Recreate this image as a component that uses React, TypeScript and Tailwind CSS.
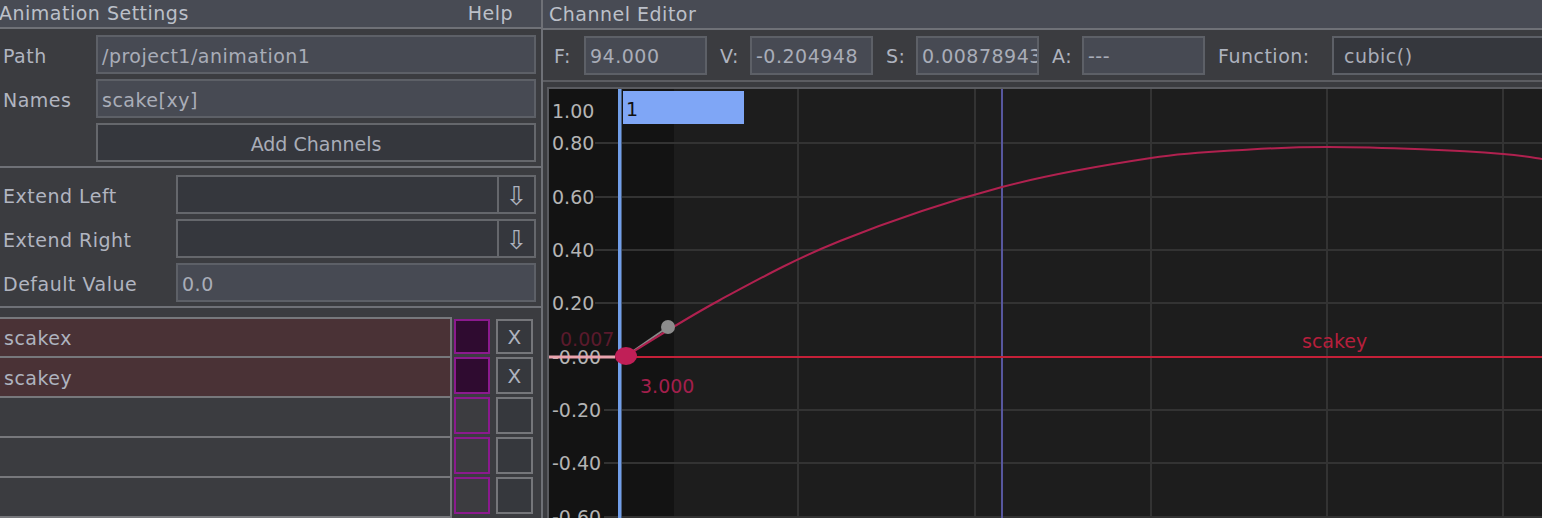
import React from "react";

const curvePts: [number, number][] = [
  [626, 356],
  [720, 300],
  [840, 241],
  [1002, 187],
  [1151, 158],
  [1250, 149.5],
  [1327, 147],
  [1422, 149.3],
  [1503, 154],
  [1542, 159],
];

function catmull(pts: [number, number][]) {
  let d = `M${pts[0][0]},${pts[0][1]}`;
  for (let i = 0; i < pts.length - 1; i++) {
    const p0 = pts[i - 1] || pts[i];
    const p1 = pts[i];
    const p2 = pts[i + 1];
    const p3 = pts[i + 2] || p2;
    const c1x = p1[0] + (p2[0] - p0[0]) / 6;
    const c1y = p1[1] + (p2[1] - p0[1]) / 6;
    const c2x = p2[0] - (p3[0] - p1[0]) / 6;
    const c2y = p2[1] - (p3[1] - p1[1]) / 6;
    d += ` C${c1x},${c1y} ${c2x},${c2y} ${p2[0]},${p2[1]}`;
  }
  return d;
}

function Graph() {
  const hLines: [number, number][] = [
    [143, 595],
    [197, 595],
    [250, 595],
    [303, 595],
    [410, 604],
    [463, 604],
    [517, 604],
  ];
  const vLines = [798, 975, 1151, 1327, 1503];
  const labels: [string, number][] = [
    ["1.00", 111],
    ["0.80", 143],
    ["0.60", 197],
    ["0.40", 250],
    ["0.20", 303],
    ["-0.00", 357],
    ["-0.20", 410],
    ["-0.40", 463],
    ["-0.60", 517],
  ];
  return (
    <svg
      width={993}
      height={429}
      viewBox="549 89 993 429"
      className="block"
      style={{ fontFamily: "'DejaVu Sans', sans-serif", fontSize: 19, letterSpacing: 0 }}
    >
      <rect x={549} y={89} width={993} height={429} fill="#1d1d1d" />
      <rect x={549} y={89} width={125} height={429} fill="#131313" />
      {vLines.map((x) => (
        <line key={x} x1={x} y1={89} x2={x} y2={518} stroke="#333333" strokeWidth={2} />
      ))}
      {hLines.map(([y, x0]) => (
        <line key={y} x1={x0} y1={y} x2={1542} y2={y} stroke="#333333" strokeWidth={2} />
      ))}
      <line x1={1002} y1={89} x2={1002} y2={518} stroke="#57579e" strokeWidth={2} />
      <rect x={618} y={89} width={3} height={429} fill="#719ee9" />
      <rect x={621} y={89} width={1} height={429} fill="#4a5f80" />
      <rect x={623} y={91} width={121} height={33} fill="#7fa6f6" />
      <text x={626} y={109} fill="#111111" dominantBaseline="central">
        1
      </text>
      {labels.map(([t, y]) => (
        <text key={t} x={552} y={y} fill="#b4b4b4" dominantBaseline="central">
          {t}
        </text>
      ))}
      <line x1={549} y1={357} x2={615} y2={357} stroke="#eaa3ad" strokeWidth={3} />
      <line x1={630} y1={357} x2={1542} y2={357} stroke="#c42038" strokeWidth={2} />
      <line x1={626} y1={356} x2={668} y2={327} stroke="#8a8a8a" strokeWidth={2} />
      <path d={catmull(curvePts)} fill="none" stroke="#b0214f" strokeWidth={2} />
      <circle cx={668} cy={327} r={7} fill="#8c8c8c" />
      <ellipse cx={626} cy={356} rx={11} ry={9} fill="#c01f57" />
      <text x={560} y={339} fill="#5a1a2c" dominantBaseline="central">
        0.007
      </text>
      <text x={640} y={386} fill="#a31f4c" dominantBaseline="central">
        3.000
      </text>
      <text x={1302} y={341} fill="#b61f3c" dominantBaseline="central">
        scakey
      </text>
    </svg>
  );
}

function TextInput({ value, className = "" }: { value: string; className?: string }) {
  return (
    <div
      className={`h-[39px] border-2 border-[#5d6067] bg-[#474a53] flex items-center pt-[3px] pl-[4px] text-[#a9adb8] whitespace-nowrap overflow-hidden ${className}`}
    >
      {value}
    </div>
  );
}

function Combo() {
  return (
    <div className="flex-1 h-[39px] border-2 border-[#65676c] bg-[#35373d] flex">
      <div className="flex-1" />
      <div className="w-[37px] border-l-2 border-[#65676c] flex items-center justify-center pt-[2px] text-[#aeb3bf] text-[26px] tracking-normal">
        ⇩
      </div>
    </div>
  );
}

function Label({ text, w }: { text: string; w: string }) {
  return <div className={`${w} pl-[3px] pt-[3px] text-[#b1b5c0]`}>{text}</div>;
}

function Left() {
  const names = ["scakex", "scakey", "", "", ""];
  return (
    <div className="w-[541px] flex flex-col shrink-0">
      <div className="h-[28px] bg-[#484b54] flex items-center justify-between text-[#bcc0c9]">
        <span className="-ml-[1px]">Animation Settings</span>
        <span className="mr-[28px]">Help</span>
      </div>
      <div className="h-[2px] bg-[#6f7177]" />
      <div className="pt-[6px] pr-[5px] flex flex-col gap-[5px]">
        <div className="flex items-center">
          <Label text="Path" w="w-[96px]" />
          <TextInput value="/project1/animation1" className="flex-1" />
        </div>
        <div className="flex items-center">
          <Label text="Names" w="w-[96px]" />
          <TextInput value="scake[xy]" className="flex-1" />
        </div>
        <div className="ml-[96px] h-[39px] border-2 border-[#65676c] bg-[#35373d] flex items-center justify-center pt-[3px] text-[#a9adb8] tracking-normal">
          Add Channels
        </div>
      </div>
      <div className="mt-[4px] h-[2px] bg-[#6f7177]" />
      <div className="pt-[7px] pr-[5px] flex flex-col gap-[5px]">
        <div className="flex items-center">
          <Label text="Extend Left" w="w-[176px]" />
          <Combo />
        </div>
        <div className="flex items-center">
          <Label text="Extend Right" w="w-[176px]" />
          <Combo />
        </div>
        <div className="flex items-center">
          <Label text="Default Value" w="w-[176px]" />
          <TextInput value="0.0" className="flex-1" />
        </div>
      </div>
      <div className="mt-[4px] h-[2px] bg-[#6f7177]" />
      <div className="mt-[9px] flex">
        <div className="w-[452px] flex flex-col">
          {names.map((n, i) => (
            <div
              key={i}
              className={`${i === 0 ? "h-[41px] border-t-2" : "h-[40px]"} border-b-2 border-r-2 border-[#77787c] flex items-center pl-[4px] pt-[3px] text-[#aeb3bf] ${
                n ? "bg-[#4a3236]" : "bg-[#3b3c40]"
              }`}
            >
              {n}
            </div>
          ))}
        </div>
        <div className="ml-[2px] pt-[2px] flex flex-col gap-[3px]">
          {names.map((n, i) => (
            <div key={i} className={`flex gap-[6px] ${i === 0 ? "h-[35px]" : "h-[37px]"}`}>
              <div
                className={`w-[36px] h-full border-2 border-[#8b1a8e] ${
                  n ? "bg-[#2f0b30]" : "bg-[#3c3c40]"
                }`}
              />
              <div className="w-[37px] h-full border-2 border-[#75767a] bg-[#36383d] flex items-center justify-center pt-[2px] text-[#aeb3bf] text-[20px]">
                {n ? "X" : ""}
              </div>
            </div>
          ))}
        </div>
      </div>
    </div>
  );
}

function Field({ label, value }: { label: string; value: string }) {
  return (
    <div className="flex items-center mr-[13px]">
      <div className="w-[30px] pt-[3px] text-[#aeb3bf]">{label}</div>
      <TextInput value={value} className="w-[123px] pl-[4px]" />
    </div>
  );
}

function Right() {
  return (
    <div className="flex-1 flex flex-col min-w-0">
      <div className="h-[28px] bg-[#484b54] flex items-center pl-[6px] text-[#bcc0c9]">
        Channel Editor
      </div>
      <div className="h-[2px] bg-[#6f7177]" />
      <div className="h-[50px] flex items-center pl-[11px] whitespace-nowrap">
        <Field label="F:" value="94.000" />
        <Field label="V:" value="-0.204948" />
        <Field label="S:" value="0.00878943" />
        <Field label="A:" value="---" />
        <div className="w-[114px] pt-[3px] text-[#aeb3bf]">Function:</div>
        <div className="flex-1 h-[39px] border-2 border-r-0 border-[#5d6067] bg-[#35373d] flex items-center pt-[3px] pl-[10px] text-[#a9adb8]">
          cubic()
        </div>
      </div>
      <div className="h-[2px] bg-[#5c5d62]" />
      <div className="mt-[5px] ml-[4px] border-l-2 border-t-2 border-[#5a5b60] flex-1 overflow-hidden">
        <Graph />
      </div>
    </div>
  );
}

export default function App() {
  return (
    <div className="w-[1542px] h-[518px] overflow-hidden flex bg-[#3b3c40] font-['DejaVu_Sans',sans-serif] text-[19px] leading-none tracking-[0.5px]">
      <Left />
      <div className="w-[2px] bg-[#6f7177] shrink-0" />
      <Right />
    </div>
  );
}
